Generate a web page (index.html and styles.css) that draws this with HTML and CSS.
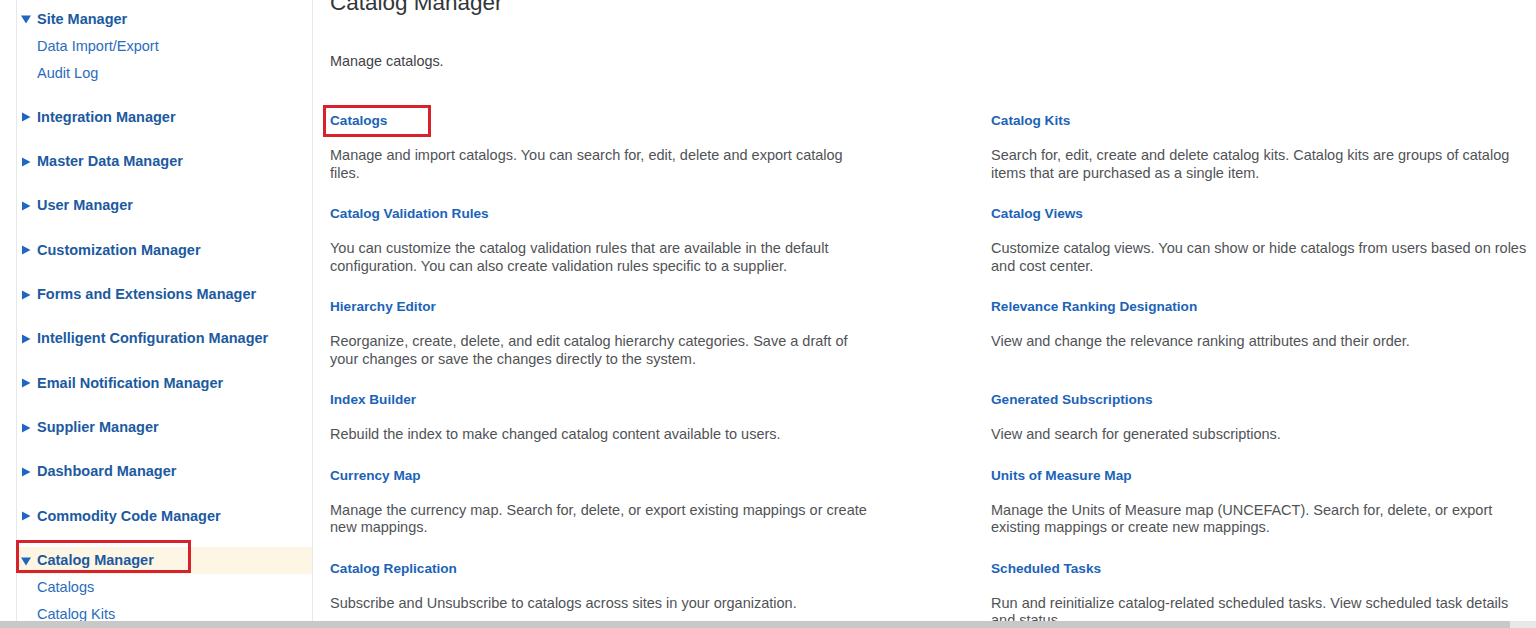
FILE: index.html
```html
<!DOCTYPE html>
<html lang="en">
<head>
<meta charset="utf-8">
<title>Catalog Manager</title>
<link rel="stylesheet" href="styles.css">
</head>
<body>
<div class="page">
  <nav class="sidebar">
    <div class="group">
      <div class="row main"><svg class="tri" viewBox="0 0 10 10"><polygon points="0,1.5 10,1.5 5,9.5"/></svg><span>Site Manager</span></div>
      <div class="row sub">Data Import/Export</div>
      <div class="row sub">Audit Log</div>
    </div>
    <div class="group"><div class="row main"><svg class="tri" viewBox="0 0 10 10"><polygon points="1,0.5 9.5,5 1,9.5"/></svg><span>Integration Manager</span></div></div>
    <div class="group"><div class="row main"><svg class="tri" viewBox="0 0 10 10"><polygon points="1,0.5 9.5,5 1,9.5"/></svg><span>Master Data Manager</span></div></div>
    <div class="group"><div class="row main"><svg class="tri" viewBox="0 0 10 10"><polygon points="1,0.5 9.5,5 1,9.5"/></svg><span>User Manager</span></div></div>
    <div class="group"><div class="row main"><svg class="tri" viewBox="0 0 10 10"><polygon points="1,0.5 9.5,5 1,9.5"/></svg><span>Customization Manager</span></div></div>
    <div class="group"><div class="row main"><svg class="tri" viewBox="0 0 10 10"><polygon points="1,0.5 9.5,5 1,9.5"/></svg><span>Forms and Extensions Manager</span></div></div>
    <div class="group"><div class="row main"><svg class="tri" viewBox="0 0 10 10"><polygon points="1,0.5 9.5,5 1,9.5"/></svg><span>Intelligent Configuration Manager</span></div></div>
    <div class="group"><div class="row main"><svg class="tri" viewBox="0 0 10 10"><polygon points="1,0.5 9.5,5 1,9.5"/></svg><span>Email Notification Manager</span></div></div>
    <div class="group"><div class="row main"><svg class="tri" viewBox="0 0 10 10"><polygon points="1,0.5 9.5,5 1,9.5"/></svg><span>Supplier Manager</span></div></div>
    <div class="group"><div class="row main"><svg class="tri" viewBox="0 0 10 10"><polygon points="1,0.5 9.5,5 1,9.5"/></svg><span>Dashboard Manager</span></div></div>
    <div class="group"><div class="row main"><svg class="tri" viewBox="0 0 10 10"><polygon points="1,0.5 9.5,5 1,9.5"/></svg><span>Commodity Code Manager</span></div></div>
    <div class="group">
      <div class="row main active"><svg class="tri" viewBox="0 0 10 10"><polygon points="0,1.5 10,1.5 5,9.5"/></svg><span>Catalog Manager</span><i class="mark mark-nav"></i></div>
      <div class="row sub">Catalogs</div>
      <div class="row sub">Catalog Kits</div>
    </div>
  </nav>
  <main class="content">
    <h1 class="title">Catalog Manager</h1>
    <p class="intro">Manage catalogs.</p>
    <div class="grid">
      <div class="cell"><h2 class="link">Catalogs<i class="mark mark-link"></i></h2><p class="desc">Manage and import catalogs. You can search for, edit, delete and export catalog<br>files.</p></div>
      <div class="cell"><h2 class="link">Catalog Kits</h2><p class="desc">Search for, edit, create and delete catalog kits. Catalog kits are groups of catalog<br>items that are purchased as a single item.</p></div>
      <div class="cell"><h2 class="link">Catalog Validation Rules</h2><p class="desc">You can customize the catalog validation rules that are available in the default<br>configuration. You can also create validation rules specific to a supplier.</p></div>
      <div class="cell"><h2 class="link">Catalog Views</h2><p class="desc">Customize catalog views. You can show or hide catalogs from users based on roles<br>and cost center.</p></div>
      <div class="cell"><h2 class="link">Hierarchy Editor</h2><p class="desc">Reorganize, create, delete, and edit catalog hierarchy categories. Save a draft of<br>your changes or save the changes directly to the system.</p></div>
      <div class="cell"><h2 class="link">Relevance Ranking Designation</h2><p class="desc">View and change the relevance ranking attributes and their order.</p></div>
      <div class="cell"><h2 class="link">Index Builder</h2><p class="desc">Rebuild the index to make changed catalog content available to users.</p></div>
      <div class="cell"><h2 class="link">Generated Subscriptions</h2><p class="desc">View and search for generated subscriptions.</p></div>
      <div class="cell"><h2 class="link">Currency Map</h2><p class="desc">Manage the currency map. Search for, delete, or export existing mappings or create<br>new mappings.</p></div>
      <div class="cell"><h2 class="link">Units of Measure Map</h2><p class="desc">Manage the Units of Measure map (UNCEFACT). Search for, delete, or export<br>existing mappings or create new mappings.</p></div>
      <div class="cell"><h2 class="link">Catalog Replication</h2><p class="desc">Subscribe and Unsubscribe to catalogs across sites in your organization.</p></div>
      <div class="cell"><h2 class="link">Scheduled Tasks</h2><p class="desc">Run and reinitialize catalog-related scheduled tasks. View scheduled task details<br>and status.</p></div>
    </div>
  </main>
</div>
<div class="hscroll"><div class="thumb"></div></div>
</body>
</html>
```

FILE: styles.css
```css
html, body {
  margin: 0;
  padding: 0;
  background: #ffffff;
  overflow: hidden;
}
body {
  font-family: "Liberation Sans", Arial, sans-serif;
  color: #4a4d50;
}
.page {
  display: flex;
  align-items: flex-start;
  height: 628px;
  overflow: hidden;
}
.sidebar {
  margin-left: 16px;
  width: 295px;
  flex: none;
  border-left: 1px solid #e6e8ea;
  border-right: 1px solid #e6e8ea;
  padding-top: 5.5px;
  height: 700px;
}
.group {
  margin-bottom: 17.33px;
}
.row {
  position: relative;
  height: 27px;
  line-height: 27px;
  display: flex;
  align-items: center;
  white-space: nowrap;
}
.main {
  padding-left: 4px;
  font-size: 14.5px;
  font-weight: bold;
  color: #1c5a9f;
}
.main .tri {
  width: 10px;
  height: 10px;
  fill: #1e66c2;
  margin-right: 6px;
  flex: none;
}
.sub {
  padding-left: 20px;
  font-size: 14.5px;
  color: #2b6cbb;
}
.active {
  background: #fdf6e4;
}
.mark {
  position: absolute;
  border: 3px solid #d8222b;
  box-sizing: border-box;
  pointer-events: none;
}
.mark-nav {
  left: -1px;
  top: -7px;
  width: 175px;
  height: 33px;
}
.content {
  flex: 1;
  padding-left: 17px;
}
.title {
  margin: -11px 0 0 0;
  font-size: 22.5px;
  line-height: 28px;
  font-weight: normal;
  color: #32363a;
}
.intro {
  margin: 34px 0 0 0;
  font-size: 14.4px;
  line-height: 20px;
  color: #3f4246;
}
.grid {
  margin-top: 40px;
  display: grid;
  grid-template-columns: 661px 1fr;
  row-gap: 22px;
}
.link {
  position: relative;
  margin: 0 0 16px 0;
  font-size: 13.6px;
  line-height: 20px;
  font-weight: bold;
  color: #1b63b8;
}
.mark-link {
  left: -7px;
  top: -6px;
  width: 108px;
  height: 32px;
}
.desc {
  margin: 0;
  font-size: 14.5px;
  line-height: 17.5px;
  color: #505356;
  white-space: nowrap;
}
.hscroll {
  position: fixed;
  left: 0;
  right: 0;
  bottom: 0;
  height: 7px;
  background: #e8e8e8;
}
.thumb {
  width: 1510px;
  height: 7px;
  background: #c8c8c8;
}
```
